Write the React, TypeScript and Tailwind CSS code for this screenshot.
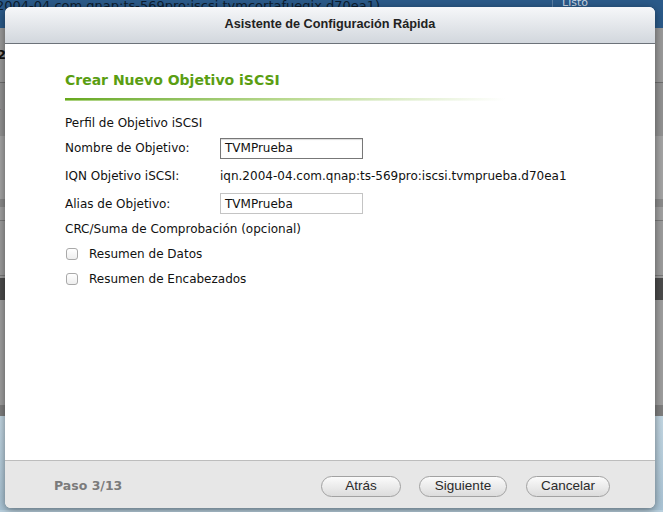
import React from "react";

const sans = { fontFamily: '"DejaVu Sans", Verdana, sans-serif' };

function Row({ h, label, children }: { h: string; label: string; children?: React.ReactNode }) {
  return (
    <div className={`flex items-center ${h}`}>
      <div className="w-[155px] shrink-0 text-[12px] text-[#111]">{label}</div>
      {children}
    </div>
  );
}

function TextBox({ value, dark }: { value: string; dark?: boolean }) {
  return (
    <div
      className={`flex h-[21px] w-[143px] items-center border bg-white px-[4px] text-[12px] text-[#111] ${
        dark ? "border-[#777] shadow-[inset_0_1px_1px_rgba(0,0,0,0.15)]" : "border-[#c4c4c4]"
      }`}
    >
      {value}
    </div>
  );
}

function Check({ label, h }: { label: string; h: string }) {
  return (
    <div className={`flex items-center ${h}`}>
      <span className="ml-[1px] h-[12px] w-[12px] rounded-[3px] border border-[#a9a9a9] bg-gradient-to-b from-white to-[#eeeeee]" />
      <span className="ml-[11px] text-[12px] text-[#111]">{label}</span>
    </div>
  );
}

function Button({ label, w }: { label: string; w: string }) {
  return (
    <button
      className={`flex h-[21px] ${w} items-center justify-center rounded-full border border-[#a2a2a2] bg-gradient-to-b from-[#fbfbfb] to-[#dcdcdc] text-[13.5px] text-[#2a2a2a]`}
      style={{ fontFamily: '"Liberation Sans", Arial, sans-serif' }}
    >
      {label}
    </button>
  );
}

export default function App() {
  return (
    <div className="relative h-[512px] w-[663px] overflow-hidden bg-[#b9d0de]" style={sans}>
      {/* page behind the dialog */}
      <div className="flex h-[28px] bg-[#2b5a89]">
        <div className="-mt-[4px] ml-[-4px] w-[556px] text-[13px] text-[#0d1d2e]">
          2004-04.com.qnap:ts-569pro:iscsi.tvmcortafuegix.d70ea1)
        </div>
        <div className="w-px bg-[#5b7ea3]" />
        <div className="-mt-[5px] ml-[9px] text-[11px] text-[#c9d6e3]">Listo</div>
      </div>
      <div className="flex h-[55px] items-center border-b border-[#6f6f6f] bg-[#9a9a9a] text-[13px] font-bold text-[#111]">
        <span className="-ml-[3px]">2</span>
      </div>
      <div className="flex h-[53px] items-center bg-[#929292] text-[11px] text-[#7a4a00]">
        <span className="-ml-[3px]">-</span>
      </div>
      <div className="h-[63px] bg-[#a4a4a4]" />
      <div className="h-[8px] bg-[#8b8b8b]" />
      <div className="h-[14px] border-b border-[#7a7a7a] bg-[#a1a1a1]" />
      <div className="h-[55px] border-b border-[#7a7a7a] bg-[#9c9c9c]" />
      <div className="h-[2px] bg-[#9c9c9c]" />
      <div className="h-[22px] bg-[#4b4b4b]" />
      <div className="h-[105px] bg-[#9e9e9e]" />
      <div className="h-[11px] bg-[#7f7f7f]" />
      <div className="h-[94px] bg-gradient-to-b from-[#c3d7e3] to-[#a9c3d4]" />

      {/* dialog */}
      <div className="absolute left-[5px] top-[7px] flex h-[501px] w-[650px] flex-col overflow-hidden rounded-[6px] bg-white shadow-[0_2px_8px_rgba(0,0,0,0.45)]">
        <div
          className="flex h-[37px] shrink-0 items-center justify-center border-b border-[#6c7279] bg-gradient-to-b from-[#f6f7f9] to-[#d2d7dd] text-[12.7px] font-bold text-[#222]"
          style={{ fontFamily: '"Liberation Sans", Arial, sans-serif' }}
        >
          Asistente de Configuración Rápida
        </div>

        <div className="flex-1 pl-[60px] pt-[28px]">
          <div className="h-[17px] text-[14px] font-bold leading-[17px] text-[#5a9e12]">
            Crear Nuevo Objetivo iSCSI
          </div>
          <div className="mt-[9px] h-[2px] w-[440px] bg-gradient-to-r from-[#66a81a] via-[#b9d98f] to-transparent" />
          <div className="h-px w-[440px] bg-gradient-to-r from-[#a6cf78] to-transparent" />

          <div className="mt-[10px] flex flex-col">
            <Row h="h-[24px]" label="Perfil de Objetivo iSCSI" />
            <Row h="h-[26px]" label="Nombre de Objetivo:">
              <TextBox value="TVMPrueba" dark />
            </Row>
            <Row h="h-[29px]" label="IQN Objetivo iSCSI:">
              <span className="text-[12px] text-[#111]">iqn.2004-04.com.qnap:ts-569pro:iscsi.tvmprueba.d70ea1</span>
            </Row>
            <Row h="h-[27px]" label="Alias de Objetivo:">
              <TextBox value="TVMPrueba" />
            </Row>
            <div className="flex h-[24px] items-center text-[12px] text-[#111]">CRC/Suma de Comprobación (opcional)</div>
            <Check h="h-[26px]" label="Resumen de Datos" />
            <Check h="h-[23px]" label="Resumen de Encabezados" />
          </div>
        </div>

        <div className="flex h-[48px] shrink-0 items-center border-t border-[#bdbdbd] bg-[#e7e7e7] pl-[49px] pr-[45px] pt-[3px]">
          <div className="text-[12.5px] font-bold text-[#7b7b7b]">Paso 3/13</div>
          <div className="ml-auto flex items-center">
            <Button label="Atrás" w="w-[80px]" />
            <div className="w-[18px]" />
            <Button label="Siguiente" w="w-[88px]" />
            <div className="w-[19px]" />
            <Button label="Cancelar" w="w-[84px]" />
          </div>
        </div>
      </div>
    </div>
  );
}
